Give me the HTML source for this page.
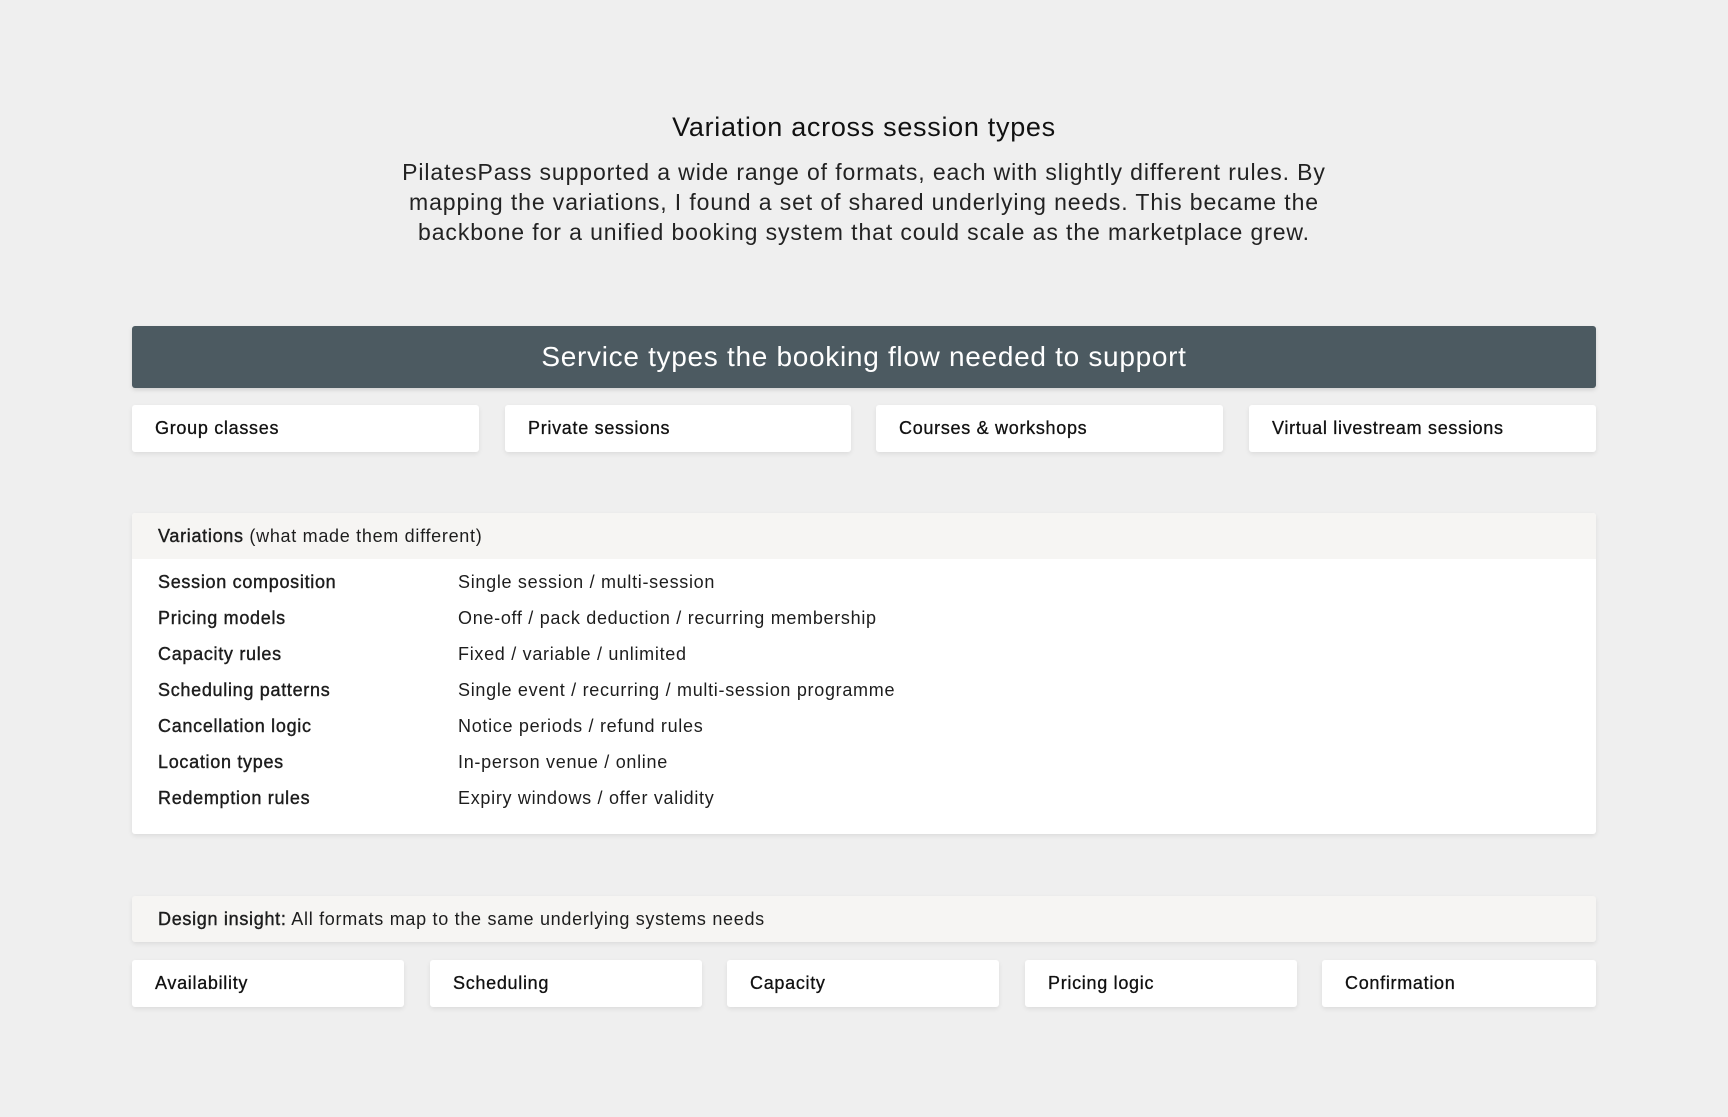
<!DOCTYPE html>
<html><head><meta charset="utf-8"><style>
*{box-sizing:border-box;margin:0;padding:0}
body{width:1728px;height:1117px;background:#efefef;font-family:"Liberation Sans",sans-serif;color:#1d1d1d;position:relative;overflow:hidden;letter-spacing:.7px}
h1{position:absolute;top:112px;left:0;width:1728px;text-align:center;font-size:27px;font-weight:500;color:#111}
.p{position:absolute;top:157px;left:0;width:1728px;text-align:center;font-size:23px;line-height:30px;color:#222;white-space:nowrap;letter-spacing:.9px}
.bar{position:absolute;left:132px;top:326px;width:1464px;height:62px;background:#4c5a61;border-radius:3px;color:#fff;font-size:28px;text-align:center;line-height:62px;box-shadow:0 2px 4px rgba(0,0,0,.12)}
.card{position:absolute;background:#fff;border-radius:3px;box-shadow:0 2px 5px rgba(0,0,0,.08);font-size:18px;padding-left:23px;line-height:47px;height:47px;color:#111;-webkit-text-stroke:.3px #111}
.box{position:absolute;left:132px;top:513px;width:1464px;height:321px;background:#fff;border-radius:3px;box-shadow:0 2px 5px rgba(0,0,0,.08);overflow:hidden}
.bh{height:46px;background:#f6f5f3;line-height:46px;padding-left:26px;font-size:18px}
.row{position:absolute;font-size:18px;left:26px}
.row b{position:absolute;left:0;font-weight:normal;-webkit-text-stroke:.4px #1d1d1d;white-space:nowrap}
.row span{position:absolute;left:300px;white-space:nowrap}
.ins{position:absolute;left:132px;top:896px;width:1464px;height:46px;background:#f6f5f3;border-radius:3px;box-shadow:0 2px 5px rgba(0,0,0,.08);line-height:46px;padding-left:26px;font-size:18px}
.m{font-weight:normal;-webkit-text-stroke:.4px #1d1d1d}
</style></head><body>
<h1>Variation across session types</h1>
<div class="p">PilatesPass supported a wide range of formats, each with slightly different rules. By<br>mapping the variations, I found a set of shared underlying needs. This became the<br>backbone for a unified booking system that could scale as the marketplace grew.</div>
<div class="bar">Service types the booking flow needed to support</div>
<div class="card" style="left:132px;top:405px;width:347px">Group classes</div>
<div class="card" style="left:505px;top:405px;width:346px">Private sessions</div>
<div class="card" style="left:876px;top:405px;width:347px">Courses &amp; workshops</div>
<div class="card" style="left:1249px;top:405px;width:347px">Virtual livestream sessions</div>
<div class="box">
<div class="bh"><b class="m">Variations</b> (what made them different)</div>
<div class="row" style="top:59px"><b>Session composition</b><span>Single session / multi-session</span></div>
<div class="row" style="top:95px"><b>Pricing models</b><span>One-off / pack deduction / recurring membership</span></div>
<div class="row" style="top:131px"><b>Capacity rules</b><span>Fixed / variable / unlimited</span></div>
<div class="row" style="top:167px"><b>Scheduling patterns</b><span>Single event / recurring / multi-session programme</span></div>
<div class="row" style="top:203px"><b>Cancellation logic</b><span>Notice periods / refund rules</span></div>
<div class="row" style="top:239px"><b>Location types</b><span>In-person venue / online</span></div>
<div class="row" style="top:275px"><b>Redemption rules</b><span>Expiry windows / offer validity</span></div>
</div>
<div class="ins"><b class="m">Design insight:</b> All formats map to the same underlying systems needs</div>
<div class="card" style="left:132px;top:960px;width:272px">Availability</div>
<div class="card" style="left:430px;top:960px;width:272px">Scheduling</div>
<div class="card" style="left:727px;top:960px;width:272px">Capacity</div>
<div class="card" style="left:1025px;top:960px;width:272px">Pricing logic</div>
<div class="card" style="left:1322px;top:960px;width:274px">Confirmation</div>
</body></html>
